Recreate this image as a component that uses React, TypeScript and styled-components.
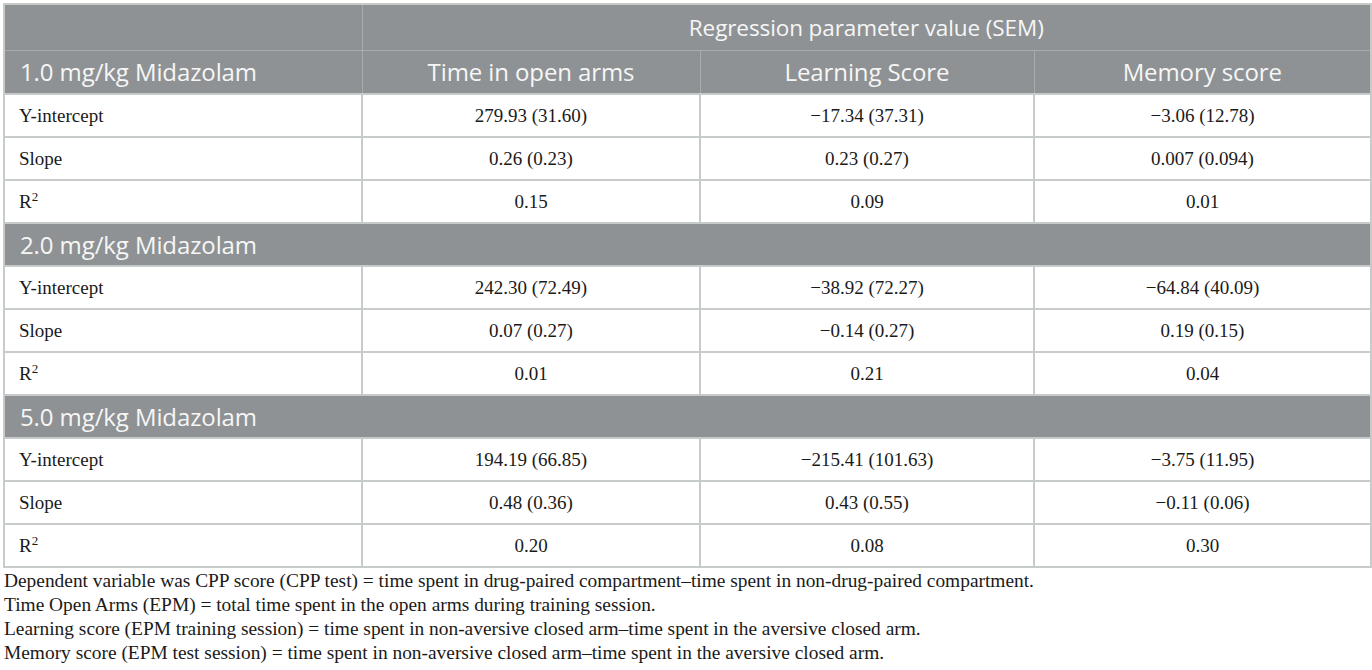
import React from "react";
import styled, { createGlobalStyle } from "styled-components";

const Global = createGlobalStyle`
  html, body { margin: 0; padding: 0; background: #ffffff; }
  body { font-family: "Liberation Serif", serif; color: #1a1a1a; }
`;

const Page = styled.div`
  padding: 3px 2px 0 3px;
`;

const Table = styled.table`
  width: 1367px;
  border-collapse: collapse;
  table-layout: fixed;
  border: 2px solid #c6cbc8;
`;

const HeadCell = styled.th<{ $align?: string; $size?: number }>`
  background: #8e9294;
  color: #f6f6f6;
  font-family: "Open Sans", sans-serif;
  font-weight: 400;
  font-size: ${(p) => p.$size || 24}px;
  letter-spacing: -0.1px;
  text-align: ${(p) => p.$align || "center"};
  padding: 0 0 0 ${(p) => (p.$align === "left" ? "15px" : "0")};
  border: 1px solid #a8acad;
  white-space: nowrap;
`;

const HeadRow = styled.tr<{ $h: number }>`
  height: ${(p) => p.$h}px;
`;

const SectionCell = styled.td`
  background: #8e9294;
  color: #f6f6f6;
  font-family: "Open Sans", sans-serif;
  font-size: 24px;
  letter-spacing: -0.1px;
  padding: 0 0 0 15px;
  border: 1px solid #a8acad;
  border-left: 2px solid #c6cbc8;
`;

const Row = styled.tr`
  height: 43px;
`;

const Cell = styled.td<{ $label?: boolean }>`
  font-family: "Liberation Serif", serif;
  font-size: 19px;
  color: #1a1a1a;
  text-align: ${(p) => (p.$label ? "left" : "center")};
  padding: 0 0 0 ${(p) => (p.$label ? "14px" : "0")};
  border: 2px solid #c8cbcc;
  white-space: nowrap;
`;

const Notes = styled.div`
  padding: 1px 0 0 1px;
  font-family: "Liberation Serif", serif;
  font-size: 19.4px;
  line-height: 24px;
  color: #1a1a1a;
`;

const Sup = styled.sup`
  font-size: 13px;
  vertical-align: 7px;
  line-height: 0;
`;

type Sec = { title: string; rows: [string, string, string][] };

const sections: Sec[] = [
  {
    title: "1.0 mg/kg Midazolam",
    rows: [
      ["279.93 (31.60)", "\u221217.34 (37.31)", "\u22123.06 (12.78)"],
      ["0.26 (0.23)", "0.23 (0.27)", "0.007 (0.094)"],
      ["0.15", "0.09", "0.01"],
    ],
  },
  {
    title: "2.0 mg/kg Midazolam",
    rows: [
      ["242.30 (72.49)", "\u221238.92 (72.27)", "\u221264.84 (40.09)"],
      ["0.07 (0.27)", "\u22120.14 (0.27)", "0.19 (0.15)"],
      ["0.01", "0.21", "0.04"],
    ],
  },
  {
    title: "5.0 mg/kg Midazolam",
    rows: [
      ["194.19 (66.85)", "\u2212215.41 (101.63)", "\u22123.75 (11.95)"],
      ["0.48 (0.36)", "0.43 (0.55)", "\u22120.11 (0.06)"],
      ["0.20", "0.08", "0.30"],
    ],
  },
];

const labels: React.ReactNode[] = [
  "Y-intercept",
  "Slope",
  <>
    R<Sup>2</Sup>
  </>,
];

const notes = [
  "Dependent variable was CPP score (CPP test) = time spent in drug-paired compartment\u2013time spent in non-drug-paired compartment.",
  "Time Open Arms (EPM) = total time spent in the open arms during training session.",
  "Learning score (EPM training session) = time spent in non-aversive closed arm\u2013time spent in the aversive closed arm.",
  "Memory score (EPM test session) = time spent in non-aversive closed arm\u2013time spent in the aversive closed arm.",
];

export default function App() {
  return (
    <Page>
      <Global />
      <Table>
        <colgroup>
          <col style={{ width: 358 }} />
          <col style={{ width: 338 }} />
          <col style={{ width: 334 }} />
          <col style={{ width: 337 }} />
        </colgroup>
        <thead>
          <HeadRow $h={46}>
            <HeadCell />
            <HeadCell colSpan={3} $size={22.5}>
              Regression parameter value (SEM)
            </HeadCell>
          </HeadRow>
          <HeadRow $h={44}>
            <HeadCell $align="left">{sections[0].title}</HeadCell>
            <HeadCell>Time in open arms</HeadCell>
            <HeadCell>Learning Score</HeadCell>
            <HeadCell>Memory score</HeadCell>
          </HeadRow>
        </thead>
        <tbody>
          {sections.map((s, si) => (
            <React.Fragment key={s.title}>
              {si > 0 && (
                <Row>
                  <SectionCell colSpan={4}>{s.title}</SectionCell>
                </Row>
              )}
              {s.rows.map((r, ri) => (
                <Row key={ri}>
                  <Cell $label>{labels[ri]}</Cell>
                  {r.map((v, vi) => (
                    <Cell key={vi}>{v}</Cell>
                  ))}
                </Row>
              ))}
            </React.Fragment>
          ))}
        </tbody>
      </Table>
      <Notes>
        {notes.map((n) => (
          <div key={n}>{n}</div>
        ))}
      </Notes>
    </Page>
  );
}
